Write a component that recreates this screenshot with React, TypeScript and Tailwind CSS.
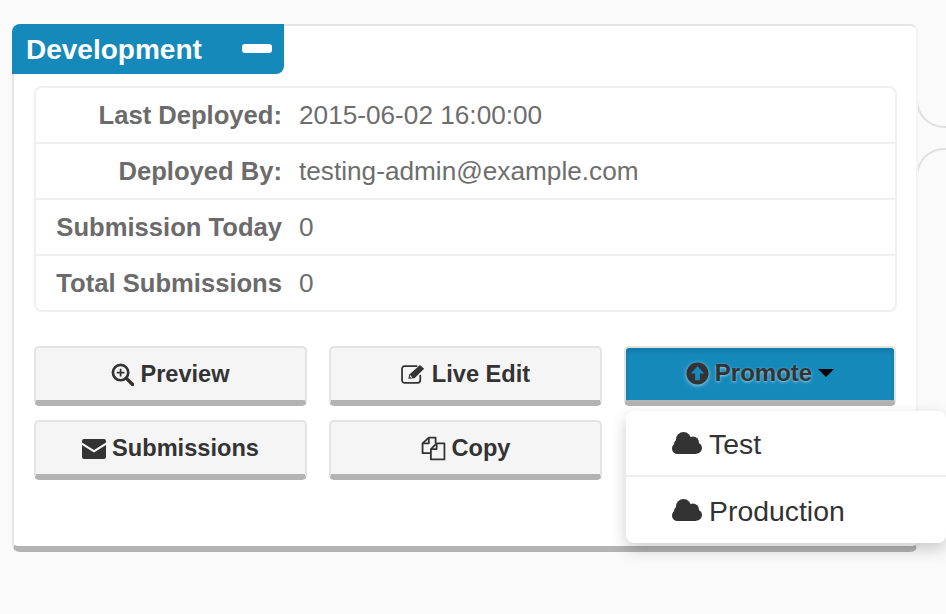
import React from "react";

const sans = "font-['Liberation_Sans',Arial,sans-serif]";

const Cloud = () => (
  <svg viewBox="0 0 30 22" className="h-[22px] w-[30px] shrink-0" fill="#333">
    <circle cx="5.500" cy="16.500" r="5.500" />
    <circle cx="24.500" cy="16" r="5.500" />
    <circle cx="11.500" cy="7.500" r="7.500" />
    <circle cx="21" cy="10.500" r="6" />
    <circle cx="6.500" cy="12" r="4.500" />
    <rect x="5.500" y="11" width="19" height="11" />
  </svg>
);

const Row = ({ label, value, last }: { label: string; value: string; last?: boolean }) => (
  <div className={`flex h-[56px] items-center border-b-2 pt-[1px] ${last ? "border-transparent" : "border-[#f0f0f0]"}`}>
    <div className="w-[246px] text-right text-[25.6px] font-bold text-[#6b6b6b]">{label}</div>
    <div className="ml-[17px] text-[26.2px] text-[#6e6e6e]">{value}</div>
  </div>
);

const Btn = ({ icon, label }: { icon: React.ReactNode; label: string }) => (
  <button className="flex h-[60px] w-[273px] items-center justify-center gap-[6px] rounded-[5px] border-2 border-b-[6px] border-[#e3e3e3] border-b-[#b3b3b3] bg-[#f5f5f5] pt-[1px] text-[23.6px] font-bold text-[#333]">
    {icon}
    <span>{label}</span>
  </button>
);

const Zoom = (
  <svg viewBox="0 0 24 24" className="h-[23px] w-[23px]" fill="none" stroke="#333" strokeWidth="2.800">
    <circle cx="10" cy="10" r="8" />
    <path d="M16 16l6.500 6.500" strokeWidth="3.600" strokeLinecap="round" />
    <path d="M10 6v8M6 10h8" strokeWidth="1.800" />
  </svg>
);
const Edit = (
  <svg viewBox="0 0 24 19" className="-mt-[2px] h-[20px] w-[25px]" fill="none" stroke="#333" strokeWidth="1.700">
    <path d="M18.500 11v4.500a2.500 2.500 0 0 1-2.500 2.500H3.500A2.500 2.500 0 0 1 1 15.500V4.500A2.500 2.500 0 0 1 3.500 2H15" strokeLinecap="round" />
    <path d="M7 14l1-4L18.200.8l4 3.700L13 13.500z" fill="#333" stroke="none" />
    <path d="M8.500 11l1.800 2" stroke="#f5f5f5" strokeWidth="1.100" />
  </svg>
);
const Mail = (
  <svg viewBox="0 0 24 20" className="h-[20px] w-[24px]" fill="#333">
    <path d="M2 0h20a2 2 0 0 1 2 2v1.400L12 11 0 3.400V2a2 2 0 0 1 2-2z" />
    <path d="M0 6l12 7.600L24 6v12a2 2 0 0 1-2 2H2a2 2 0 0 1-2-2z" />
  </svg>
);
const Copy = (
  <svg viewBox="0 0 24 24" className="h-[25px] w-[25px]" fill="none" stroke="#333" strokeWidth="1.700" strokeLinejoin="round">
    <path d="M9 16.500H1.500V7L7.500 1.500H14V7" />
    <path d="M7.500 1.500V7H1.500" />
    <path d="M9.500 22.500V12.500L15 7h7.500v15.500z" />
    <path d="M15 7v5.500H9.500" />
  </svg>
);

export default function App() {
  return (
    <div className={`flex h-[614px] w-[946px] items-start overflow-hidden bg-[#fafafa] pl-[12px] pt-[24px] ${sans}`}>
      <div className="relative h-[528px] w-[906px] shrink-0 rounded-[8px] border-2 border-b-[6px] border-[#e5e5e5] border-r-[#f4f4f4] border-b-[#b3b3b3] bg-white">
        <div className="-ml-[2px] -mt-[2px] flex h-[50px] w-[272px] items-center justify-between rounded-tl-[8px] rounded-br-[8px] bg-[#1689bb] pl-[14px] pr-[12px]">
          <span className="pt-[2px] text-[28px] font-bold text-white">Development</span>
          <span className="mb-[1px] h-[9px] w-[30px] rounded-[3px] bg-white" />
        </div>

        <div className="ml-[20px] mt-[12px] h-[226px] w-[863px] rounded-[8px] border-2 border-[#f0f0f0]">
          <Row label="Last Deployed:" value="2015-06-02 16:00:00" />
          <Row label="Deployed By:" value="testing-admin@example.com" />
          <Row label="Submission Today" value="0" />
          <Row label="Total Submissions" value="0" last />
        </div>

        <div className="ml-[20px] mt-[34px] grid w-[862px] grid-cols-[273px_273px_272px] gap-x-[22px] gap-y-[14px]">
          <Btn icon={Zoom} label="Preview" />
          <Btn icon={Edit} label="Live Edit" />
          <button className="flex h-[60px] w-[272px] items-center justify-center gap-[6px] rounded-[5px] border-2 border-b-[6px] border-[#e3e3e3] border-b-[#b3b3b3] bg-[#1689bb] pb-[2px] text-[24px] font-bold text-[#333] shadow-[inset_0_3px_5px_rgba(0,0,0,0.125)] [text-shadow:0_1px_3px_rgba(255,255,255,0.6)]">
            <svg viewBox="0 0 24 24" className="h-[23px] w-[23px] drop-shadow-[0_1px_2px_rgba(255,255,255,0.6)]">
              <circle cx="12" cy="12" r="11.500" fill="#333" />
              <path d="M12 4.500L19 12h-4.500v7h-5v-7H5z" fill="#1689bb" />
            </svg>
            <span>Promote</span>
            <span className="h-0 w-0 border-x-[8px] border-t-[8px] border-x-transparent border-t-black" />
          </button>
          <Btn icon={Mail} label="Submissions" />
          <Btn icon={Copy} label="Copy" />
        </div>

        <div className="absolute left-[612px] top-[385px] z-10 w-[320px] rounded-[8px] bg-white text-[28.4px] text-[#333] shadow-[0_6px_16px_rgba(0,0,0,0.2)]">
          <div className="flex h-[66px] items-center gap-[7px] border-b-2 border-[#eeeeee] pl-[46px]">
            <Cloud />
            <span className="pt-[2px]">Test</span>
          </div>
          <div className="flex h-[66px] items-center gap-[7px] pl-[46px]">
            <Cloud />
            <span className="pt-[2px]">Production</span>
          </div>
        </div>
      </div>

      <div className="flex w-[40px] shrink-0 flex-col gap-[20px]">
        <div className="-ml-[2px] mt-[6px] h-[98px] rounded-bl-[28px] border-b-2 border-l-2 border-[#e0e0e0]" />
        <div className="-ml-[2px] h-[398px] rounded-tl-[28px] border-l-2 border-t-2 border-[#e0e0e0]" />
      </div>
    </div>
  );
}
